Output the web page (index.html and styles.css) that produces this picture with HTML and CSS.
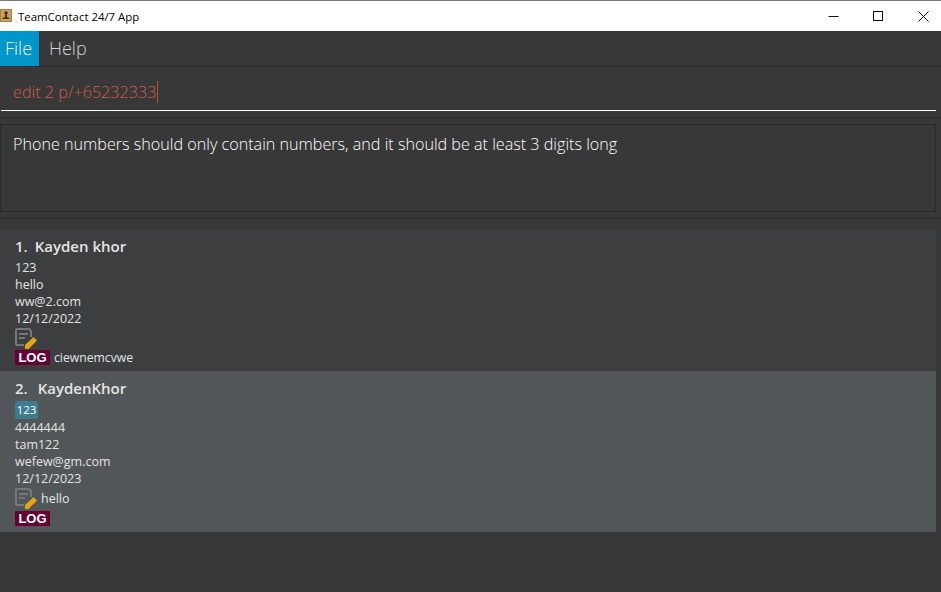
FILE: index.html
```html
<!DOCTYPE html>
<html lang="en">
<head>
    <meta charset="UTF-8">
    <title>TeamContact 24/7 App</title>
    <link rel="stylesheet" href="styles.css">
</head>
<body>
    <div class="titlebar">
        <svg class="app-icon" width="16" height="16" viewBox="0 0 16 16">
            <rect x="0.500" y="1.500" width="11" height="12" fill="#c9a062" stroke="#a5834e"/>
            <circle cx="6" cy="5" r="1.800" fill="#4a3420"/>
            <path d="M5 6.500h2v2.500l2.500 1v1h-7v-1l2.500-1z" fill="#4a3420"/>
        </svg>
        <span class="app-title">TeamContact 24/7 App</span>
        <div class="win-buttons">
            <svg width="11" height="11" viewBox="0 0 11 11"><path d="M0.500 5.500h10" stroke="#111" fill="none"/></svg>
            <svg width="11" height="11" viewBox="0 0 11 11"><rect x="0.500" y="0.500" width="9" height="9" stroke="#111" fill="none"/></svg>
            <svg width="11" height="11" viewBox="0 0 11 11"><path d="M0.500 0.500l10 10M10.500 0.500l-10 10" stroke="#111" fill="none"/></svg>
        </div>
    </div>
    <div class="menubar">
        <div class="menu-item active">File</div>
        <div class="menu-item">Help</div>
    </div>
    <div class="command-pane">
        <div class="command-box"><span class="command-text">edit 2 p/+65232333</span><span class="caret"></span></div>
    </div>
    <div class="result-pane">
        <div class="result-box">Phone numbers should only contain numbers, and it should be at least 3 digits long</div>
    </div>
    <div class="person-list">
        <div class="card">
            <div class="name"><span class="index first">1.</span>Kayden khor</div>
            <div class="line">123</div>
            <div class="line">hello</div>
            <div class="line">ww@2.com</div>
            <div class="line">12/12/2022</div>
            <div class="note-row">
                <svg class="note-icon" width="23" height="21" viewBox="0 0 23 21">
                    <path d="M9 17H2a1 1 0 0 1-1-1V2a1 1 0 0 1 1-1h12a1 1 0 0 1 1 1l1 1v6" fill="none" stroke="#777" stroke-width="2"/>
                    <path d="M4 6h9M4 10h6" stroke="#777" stroke-width="2"/>
                    <path d="M10 21v-4l8.500-8 3.500 3.500-8.500 8.500z" fill="#e8a50c"/>
                </svg>
            </div>
            <div class="tag-row"><span class="log">LOG</span><span class="log-text">ciewnemcvwe</span></div>
        </div>
        <div class="card selected">
            <div class="name"><span class="index">2.</span>KaydenKhor</div>
            <div class="tags"><span class="tag">123</span></div>
            <div class="line">4444444</div>
            <div class="line">tam122</div>
            <div class="line">wefew@gm.com</div>
            <div class="line">12/12/2023</div>
            <div class="note-row">
                <svg class="note-icon" width="23" height="21" viewBox="0 0 23 21">
                    <path d="M9 17H2a1 1 0 0 1-1-1V2a1 1 0 0 1 1-1h12a1 1 0 0 1 1 1l1 1v6" fill="none" stroke="#777" stroke-width="2"/>
                    <path d="M4 6h9M4 10h6" stroke="#777" stroke-width="2"/>
                    <path d="M10 21v-4l8.500-8 3.500 3.500-8.500 8.500z" fill="#e8a50c"/>
                </svg>
                <span class="note-text">hello</span>
            </div>
            <div class="tag-row"><span class="log">LOG</span></div>
        </div>
    </div>
</body>
</html>
```

FILE: styles.css
```css
* {
    margin: 0;
    padding: 0;
    box-sizing: border-box;
}
body {
    width: 941px;
    height: 592px;
    overflow: hidden;
    background: #383838;
    font-family: "Open Sans", sans-serif;
    color: #fff;
}
.titlebar {
    display: flex;
    align-items: center;
    height: 31px;
    background: #fff;
    border-top: 1px solid #7a7a7a;
    color: #000;
}
.app-title {
    margin-left: 2px;
    font-size: 11.4px;
}
.win-buttons {
    display: flex;
    gap: 34px;
    margin-left: auto;
    margin-right: 12px;
}
.menubar {
    display: flex;
    height: 36px;
    border-bottom: 1px solid #2b2b2b;
}
.menu-item {
    padding-left: 10px;
    line-height: 35px;
    font-size: 18px;
    font-weight: 300;
    color: #d4d4d4;
}
.menu-item.active {
    width: 39px;
    padding-left: 5px;
    background: #0096c9;
    color: #e8f4f8;
}
.command-pane {
    height: 52px;
    padding: 0 5px 0 1px;
    border-bottom: 2px solid #2f2f2f;
}
.command-box {
    display: flex;
    align-items: center;
    height: 44px;
    padding: 6px 0 0 12px;
    border-bottom: 1px solid #fff;
}
.command-text {
    font-size: 16.2px;
    font-weight: 300;
    color: #cc5f4a;
}
.caret {
    width: 1px;
    height: 22px;
    background: #b9533f;
}
.result-pane {
    height: 100px;
    padding: 5px 5px 5px 0;
    border-bottom: 2px solid #2f2f2f;
}
.result-box {
    height: 88px;
    padding: 8px 12px;
    border: 1px solid #2b2b2b;
    font-size: 16.15px;
    font-weight: 300;
    color: #fff;
}
.person-list {
    margin-top: 11px;
    margin-right: 5px;
}
.card {
    height: 141px;
    padding: 5px 15px 0;
    background: #3c3e3f;
}
.card.selected {
    height: 161px;
    padding-top: 6px;
    background: #515658;
}
.name {
    height: 24px;
    font-size: 15px;
    font-weight: 600;
    line-height: 23px;
    color: #e4e4e4;
}
.selected .name {
    height: 23px;
}
.index {
    margin-right: 10px;
}
.index.first {
    margin-right: 7px;
}
.line {
    font-size: 12.5px;
    line-height: 17px;
    color: #e4e4e4;
}
.tags {
    display: flex;
    height: 19px;
    padding-top: 1px;
}
.tag {
    width: 23px;
    height: 18px;
    background: #3e7b91;
    border-radius: 2px;
    font-size: 11.5px;
    line-height: 18px;
    text-align: center;
    color: #fff;
}
.note-row {
    display: flex;
    align-items: center;
    height: 22px;
}
.selected .note-row {
    height: 23px;
}
.note-text {
    margin-left: 3px;
    font-size: 12.5px;
    color: #e4e4e4;
}
.tag-row {
    display: flex;
    align-items: center;
    gap: 4px;
    margin-top: 1px;
}
.log {
    width: 35px;
    height: 15px;
    background: #660033;
    font-family: "Liberation Sans", sans-serif;
    font-size: 13px;
    font-weight: 700;
    line-height: 15px;
    text-align: center;
    color: #fff;
}
.log-text {
    font-size: 12.2px;
    line-height: 15px;
    color: #e4e4e4;
}
```
